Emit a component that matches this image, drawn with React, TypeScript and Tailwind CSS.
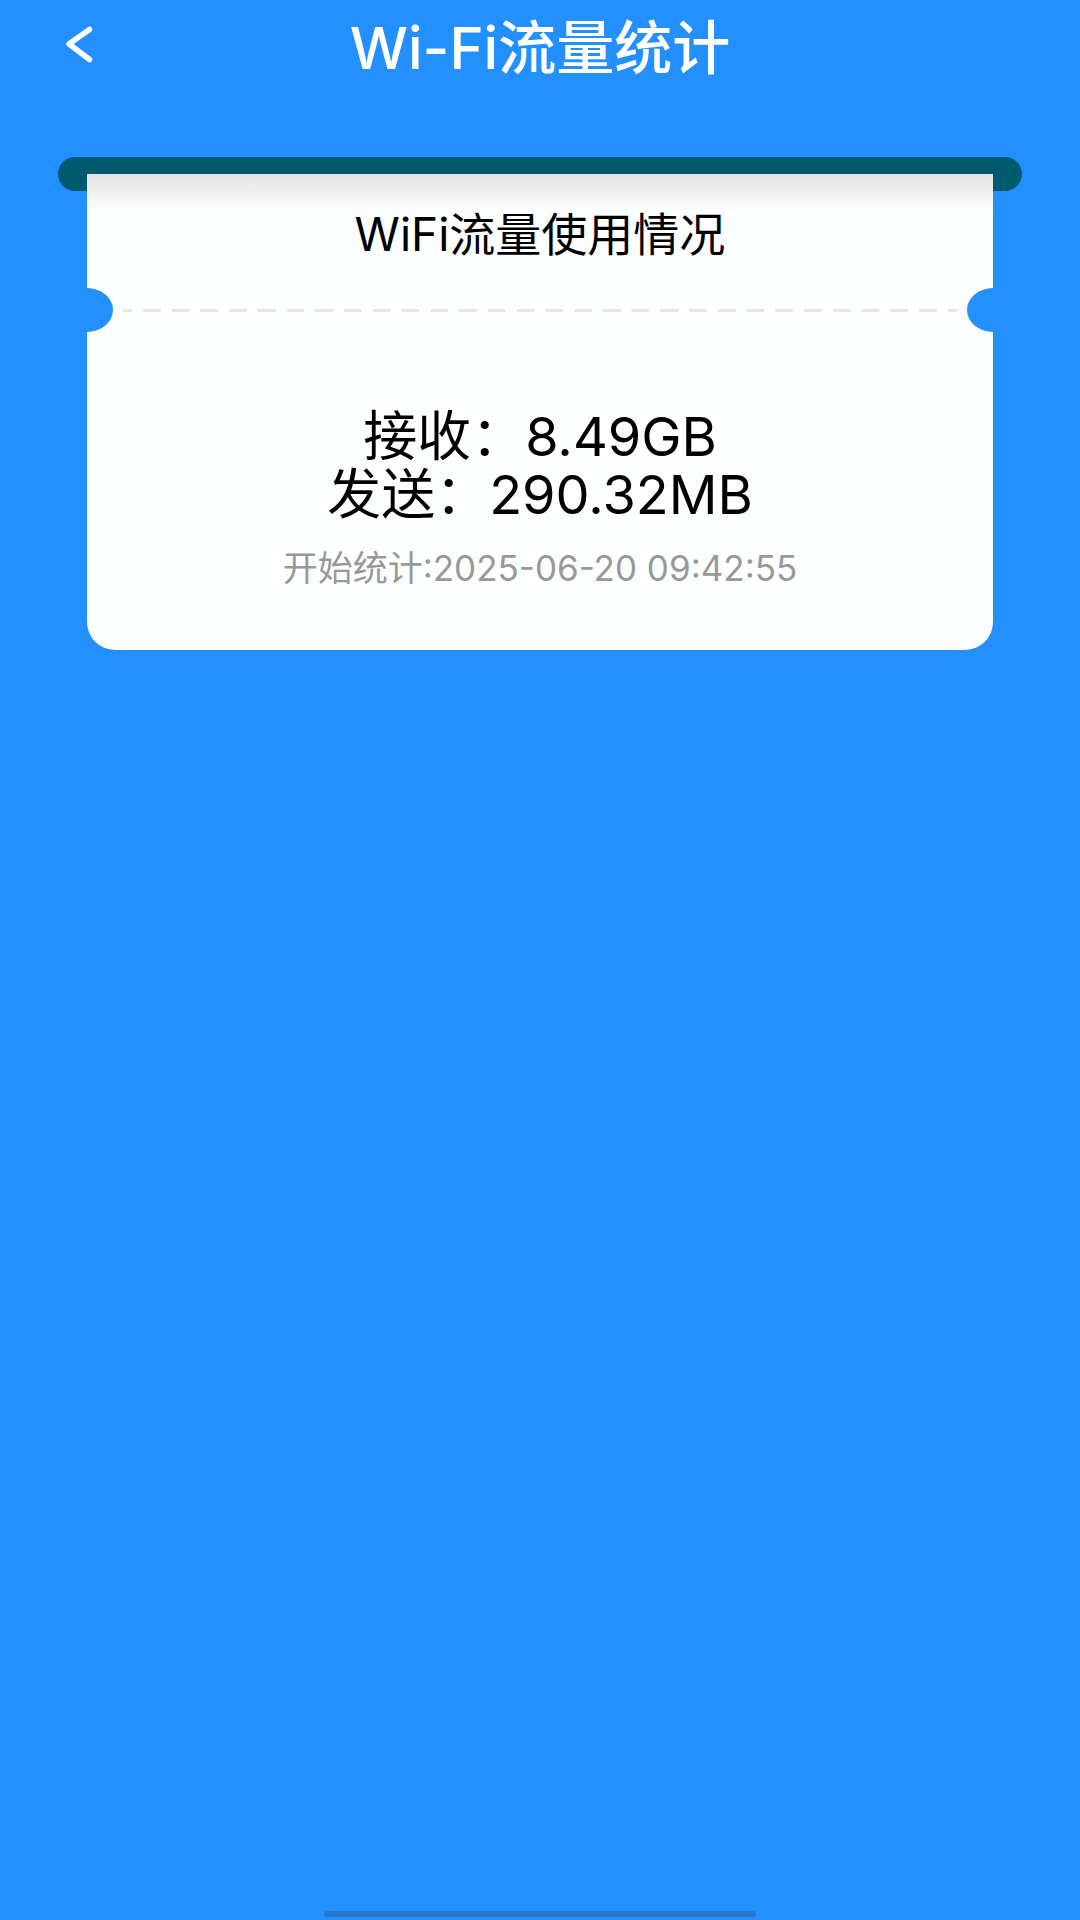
import React from "react";

type Usage = {
    label: string;
    value: string;
}

const usage: Usage[] = [
    { label: "接收", value: "8.49GB" },
    { label: "发送", value: "290.32MB" },
];

const Header = () => {
    return (
        <header className="relative flex h-24 items-center justify-center text-white">
            <button
                type="button"
                aria-label="返回"
                className="absolute left-[60px] top-5 p-1"
            >
                <svg width="32" height="40" viewBox="0 0 32 40" fill="none">
                    <path
                        d="M25.5 5.5 5 20 25.5 35.5"
                        stroke="currentColor"
                        strokeWidth="5.5"
                        strokeLinecap="round"
                        strokeLinejoin="round"
                    />
                </svg>
            </button>
            <h1 className="text-[58px] leading-[64px] font-medium">Wi-Fi流量统计</h1>
        </header>
    )
}

const TearLine = () => {
    return (
        <div className="flex h-11 items-center justify-between gap-x-[10px]">
            <div className="h-11 w-[26px] bg-[#2490ff] rounded-r-[100%_50%]" />
            <div className="h-[3px] flex-1 bg-[linear-gradient(90deg,#e6e6e6_9px,transparent_9px,transparent_20px,#e6e6e6_20px)] bg-[length:29px_3px] bg-repeat-round" />
            <div className="h-11 w-[26px] bg-[#2490ff] rounded-l-[100%_50%]" />
        </div>
    )
}

const Ticket = () => {
    return (
        <section className="px-[58px] pt-[61px]">
            <div className="h-[34px] rounded-full bg-[#005a6e]" />
            <div className="mx-[29px] -mt-[17px] rounded-b-[28px] bg-[#fdfefe] bg-[linear-gradient(#e4e4e4,#fdfefe_38px)] pb-[58px] text-center">
                <h2 className="pt-8 pb-[26px] text-[46px] leading-[56px] text-black">WiFi流量使用情况</h2>
                <TearLine />
                <div className="pt-[76px] text-[54px] leading-[58px] text-black">
                    {usage.map(({ label, value }) => (
                        <p key={label}>{label}：{value}</p>
                    ))}
                </div>
                <p className="pt-5 text-[35px] leading-[48px] text-[#999999]">
                    开始统计:2025-06-20 09:42:55
                </p>
            </div>
        </section>
    )
}

const App = () => {
    return (
        <div className="flex min-h-screen flex-col bg-[#2490ff] font-[Inter,'Noto_Sans_CJK_SC',sans-serif]">
            <Header />
            <main className="flex-1">
                <Ticket />
            </main>
            <div className="mx-auto mb-[3px] h-[6px] w-2/5 rounded-full bg-[#2878c8]" />
        </div>
    )
}

export default App;
